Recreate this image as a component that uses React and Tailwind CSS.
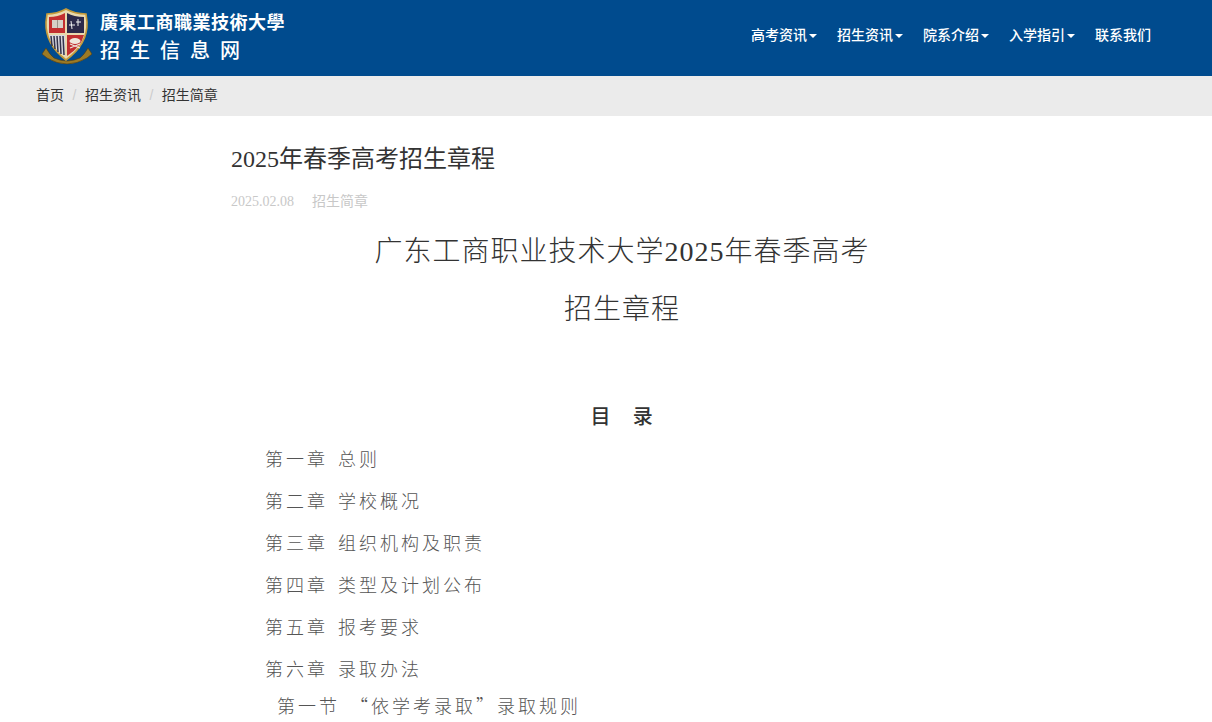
const NAV_ITEMS = [
  { label: "高考资讯", caret: true },
  { label: "招生资讯", caret: true },
  { label: "院系介绍", caret: true },
  { label: "入学指引", caret: true },
  { label: "联系我们", caret: false },
];

const CONTENTS = [
  ["第一章", "总则"],
  ["第二章", "学校概况"],
  ["第三章", "组织机构及职责"],
  ["第四章", "类型及计划公布"],
  ["第五章", "报考要求"],
  ["第六章", "录取办法"],
];

const SANS = "font-['Liberation_Sans','Noto_Sans_CJK_SC',sans-serif]";
const SERIF = "font-['Liberation_Serif','Noto_Sans_CJK_SC',serif]";
const CJK = "font-['Noto_Sans_CJK_SC',sans-serif]";

function SchoolCrest() {
  return (
    <svg width="50" height="60" viewBox="0 0 50 60" className="shrink-0" aria-hidden="true">
      <path d="M0 46 L4 40 Q8 47 12 50 Q25 56 38 50 Q42 47 46 40 L50 46 L45 50 Q25 62 5 50 Z" fill="#9c7a24" stroke="#4f3b12" strokeWidth="0.6" />
      <path d="M24 1 Q33 6 44 6 L45 14 Q46 36 24 52 Q3 36 4 14 L5 6 Q15 6 24 1 Z" fill="#e9d9ae" stroke="#c49a3a" strokeWidth="1.6" />
      <path d="M7 9 Q16 9 23 5 L23 25 L7 25 Z" fill="#c22f30" />
      <path d="M25 5 Q32 9 42 9 L42 25 L25 25 Z" fill="#2c2a4a" />
      <path d="M7 27 L23 27 L23 48 Q9 39 7 27 Z" fill="#d8d8e0" />
      <path d="M25 27 L42 27 Q39 39 25 48 Z" fill="#c22f30" />
      <rect x="10" y="12" width="11" height="8" fill="#d6d2c8" />
      <path d="M15.5 12 L15.5 20" stroke="#8a857a" strokeWidth="0.8" />
      <path d="M29 13 L30 21 M27 17 L33 17 M36 11 L36 18 M34 14 L39 14" stroke="#f2f2f2" strokeWidth="1" />
      <path d="M9 28 L10 38 M12 28 L13 41 M15 28 L16 44 M18 28 L19 46 M21 28 L22 47" stroke="#33334a" strokeWidth="1.5" />
      <ellipse cx="33" cy="33" rx="5.5" ry="3" fill="#efe8dc" />
      <path d="M28 40 L38 36 M28 36 L38 40" stroke="#efe8dc" strokeWidth="1.2" />
    </svg>
  );
}

function Header() {
  return (
    <header className="flex h-[76px] items-center justify-between bg-[#004b8e] pr-[61px] pl-[42px]">
      <div className="flex items-center gap-[8px]">
        <SchoolCrest />
        <div className={`${SANS} flex flex-col pb-[3px] text-white`}>
          <span className="text-[18px] leading-[26px] font-bold tracking-[0.5px] whitespace-nowrap">廣東工商職業技術大學</span>
          <span className="mt-[2px] text-[20px] leading-[26px] font-medium tracking-[10px] whitespace-nowrap">招生信息网</span>
        </div>
      </div>
      <nav className={`${SANS} flex items-center gap-[20px] pb-[6px] text-[14px] font-medium text-white`}>
        {NAV_ITEMS.map((item) => (
          <span key={item.label} className="flex items-center whitespace-nowrap">
            {item.label}
            {item.caret && (
              <span className="mt-[2px] ml-[2px] h-0 w-0 border-x-[4px] border-t-[4px] border-x-transparent border-t-white" />
            )}
          </span>
        ))}
      </nav>
    </header>
  );
}

function Breadcrumb() {
  return (
    <div className={`${SANS} flex h-[40px] items-center bg-[#ebebeb] pb-[2px] pl-[36px] text-[14px] text-[#333333]`}>
      <span>首页</span>
      <span className="px-[8.5px] text-[#cccccc]">/</span>
      <span>招生资讯</span>
      <span className="px-[8.5px] text-[#cccccc]">/</span>
      <span>招生简章</span>
    </div>
  );
}

export default function App() {
  return (
    <div className="h-[722px] overflow-hidden bg-white">
      <Header />
      <Breadcrumb />
      <main className="ml-[231px] w-[782px]">
        <h1 className={`${SERIF} mt-[27px] text-[24px] leading-[33px] font-normal text-[#333333]`}>
          2025年春季高考招生章程
        </h1>
        <div className={`${SERIF} mt-[16px] flex gap-[18px] text-[14px] leading-[20px] text-[#c8c8c8]`}>
          <span>2025.02.08</span>
          <span>招生简章</span>
        </div>
        <h2 className={`${SERIF} mt-[11px] text-center text-[28px] leading-[58px] font-light tracking-[1px] text-[#333333]`}>
          广东工商职业技术大学2025年春季高考
          <br />
          招生章程
        </h2>
        <p className={`${SANS} mt-[64px] pl-[3px] text-center text-[20px] leading-[28px] font-medium tracking-[3.7px] whitespace-pre text-[#333333]`}>
          目  录
        </p>
        <div className={`${SERIF} mt-[8px] pl-[34px] text-[18px] font-light tracking-[3px] whitespace-pre text-[#555555]`}>
          {CONTENTS.map(([chapter, title]) => (
            <p key={chapter} className="leading-[42px]">
              {chapter}
              <span className="ml-[10px]">{title}</span>
            </p>
          ))}
          <p className="mt-[-1px] pl-[12px] leading-[30px]">
            第一节
            <span className={`${CJK} ml-[10px]`}>“</span>
            依学考录取
            <span className={CJK}>”</span>
            录取规则
          </p>
        </div>
      </main>
    </div>
  );
}
